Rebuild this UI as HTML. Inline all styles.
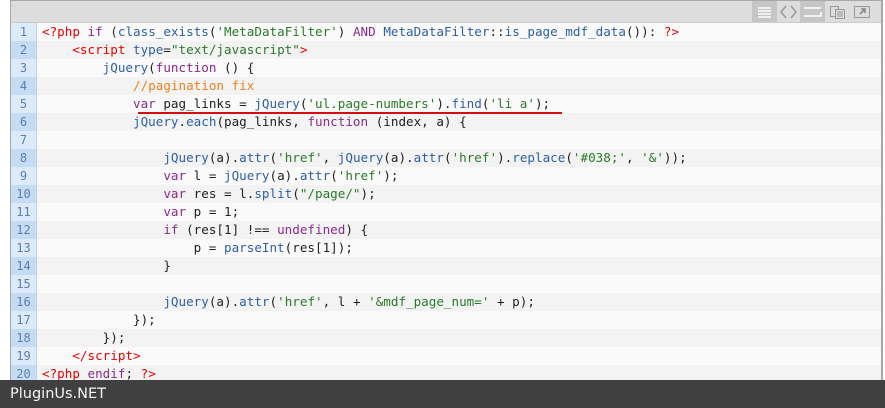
<!DOCTYPE html><html><head><style>
body{margin:0;width:885px;height:408px;overflow:hidden;background:#fff;font-family:"Liberation Sans",sans-serif;position:relative}
.box{position:absolute;left:10px;top:0;width:870px;height:400px;border:1px solid #a8a8a8;border-right:2px solid #a8a8a8;background:#fafafa}
.tb{height:21px;background:#ddd;border-bottom:1px solid #ccc;position:relative}
.btn{position:absolute;top:0;height:21px}
.row{height:18px;display:flex;font:12.6px "DejaVu Sans Mono",monospace;line-height:18px;white-space:pre}
.g{width:25px;text-align:center;color:#5a7fb0;background:#ddeafa;border-right:1px solid #c0d0e8;font-size:12px}
.row.e .g{background:#c6dcf4}
.row.e{background:#f3f3f3}
.c{padding-left:5px;color:#222}
.p{color:#e00}.k{color:#8a2b8a}.f{color:#2d5fa8}.s{color:#2a7a2a}.cm{color:#f08020}.n{color:#333}
.foot{position:absolute;left:0;top:380px;width:885px;height:28px;background:#404040;color:#f4f4f4;font:14.5px "DejaVu Sans",sans-serif;line-height:28px;padding-left:10px;box-sizing:border-box}
</style></head><body>
<div class="box">
<div class="tb">
<div class="btn" style="left:741px;width:25px;background:#c6c6c6"><svg width="25" height="21"><g stroke="#fff" stroke-width="1.5"><line x1="6" y1="7" x2="19" y2="7"/><line x1="6" y1="10" x2="19" y2="10"/><line x1="6" y1="13" x2="19" y2="13"/><line x1="6" y1="16" x2="19" y2="16"/></g></svg></div>
<div class="btn" style="left:766px;width:23px"><svg width="23" height="21"><polyline points="9,5 4,11 9,17" fill="none" stroke="#999" stroke-width="1.5"/><polyline points="14,5 19,11 14,17" fill="none" stroke="#999" stroke-width="1.5"/></svg></div>
<div class="btn" style="left:789px;width:25px;background:#c6c6c6"><svg width="25" height="21"><g stroke="#fff" stroke-width="1.5" fill="none"><line x1="4" y1="7" x2="21" y2="7"/><polyline points="21,11 21,15 6,15"/><line x1="4" y1="15" x2="10" y2="15"/></g></svg></div>
<div class="btn" style="left:816px;width:22px"><svg width="22" height="21"><g stroke="#999" fill="none"><rect x="3.5" y="5.5" width="8" height="10"/><rect x="8.5" y="8.5" width="9" height="9" fill="#ddd"/><line x1="10" y1="11" x2="16" y2="11"/><line x1="10" y1="13" x2="16" y2="13"/><line x1="10" y1="15" x2="16" y2="15"/></g></svg></div>
<div class="btn" style="left:840px;width:22px"><svg width="22" height="21"><rect x="3.5" y="5.5" width="15" height="11" fill="none" stroke="#999"/><path d="M9 13 L14 8 M10 8 H14 V12" stroke="#888" stroke-width="1.6" fill="none"/></svg></div>
</div>
<div class="row"><div class="g">1</div><div class="c"><span class="p">&lt;?php</span> <span class="k">if</span> <span class="n">(</span><span class="f">class_exists</span>(<span class="s">'MetaDataFilter'</span>) <span class="k">AND</span> <span class="f">MetaDataFilter</span>::<span class="f">is_page_mdf_data</span>()): <span class="p">?&gt;</span></div></div>
<div class="row e"><div class="g">2</div><div class="c">    <span class="p">&lt;script</span> <span class="f">type</span>=<span class="s">"text/javascript"</span><span class="p">&gt;</span></div></div>
<div class="row"><div class="g">3</div><div class="c">        <span class="f">jQuery</span>(<span class="k">function</span> () {</div></div>
<div class="row e"><div class="g">4</div><div class="c">            <span class="cm">//pagination fix</span></div></div>
<div class="row"><div class="g">5</div><div class="c">            <span class="k">var</span> pag_links = <span class="f">jQuery</span>(<span class="s">'ul.page-numbers'</span>).<span class="f">find</span>(<span class="s">'li a'</span>);</div></div>
<div class="row e"><div class="g">6</div><div class="c">            <span class="f">jQuery</span>.<span class="f">each</span>(pag_links, <span class="k">function</span> (index, a) {</div></div>
<div class="row"><div class="g">7</div><div class="c"> </div></div>
<div class="row e"><div class="g">8</div><div class="c">                <span class="f">jQuery</span>(a).<span class="f">attr</span>(<span class="s">'href'</span>, <span class="f">jQuery</span>(a).<span class="f">attr</span>(<span class="s">'href'</span>).<span class="f">replace</span>(<span class="s">'#038;'</span>, <span class="s">'&amp;'</span>));</div></div>
<div class="row"><div class="g">9</div><div class="c">                <span class="k">var</span> l = <span class="f">jQuery</span>(a).<span class="f">attr</span>(<span class="s">'href'</span>);</div></div>
<div class="row e"><div class="g">10</div><div class="c">                <span class="k">var</span> res = l.<span class="f">split</span>(<span class="s">"/page/"</span>);</div></div>
<div class="row"><div class="g">11</div><div class="c">                <span class="k">var</span> p = 1;</div></div>
<div class="row e"><div class="g">12</div><div class="c">                <span class="k">if</span> (res[1] !== <span class="k">undefined</span>) {</div></div>
<div class="row"><div class="g">13</div><div class="c">                    p = <span class="f">parseInt</span>(res[1]);</div></div>
<div class="row e"><div class="g">14</div><div class="c">                }</div></div>
<div class="row"><div class="g">15</div><div class="c"> </div></div>
<div class="row e"><div class="g">16</div><div class="c">                <span class="f">jQuery</span>(a).<span class="f">attr</span>(<span class="s">'href'</span>, l + <span class="s">'&amp;mdf_page_num='</span> + p);</div></div>
<div class="row"><div class="g">17</div><div class="c">            });</div></div>
<div class="row e"><div class="g">18</div><div class="c">        });</div></div>
<div class="row"><div class="g">19</div><div class="c">    <span class="p">&lt;/script&gt;</span></div></div>
<div class="row e"><div class="g">20</div><div class="c"><span class="p">&lt;?php</span> <span class="k">endif</span>; <span class="p">?&gt;</span></div></div>
</div>
<div style="position:absolute;left:138px;top:112px;width:424px;height:2px;background:#d01010"></div>
<div class="foot">PluginUs.NET</div>
</body></html>
